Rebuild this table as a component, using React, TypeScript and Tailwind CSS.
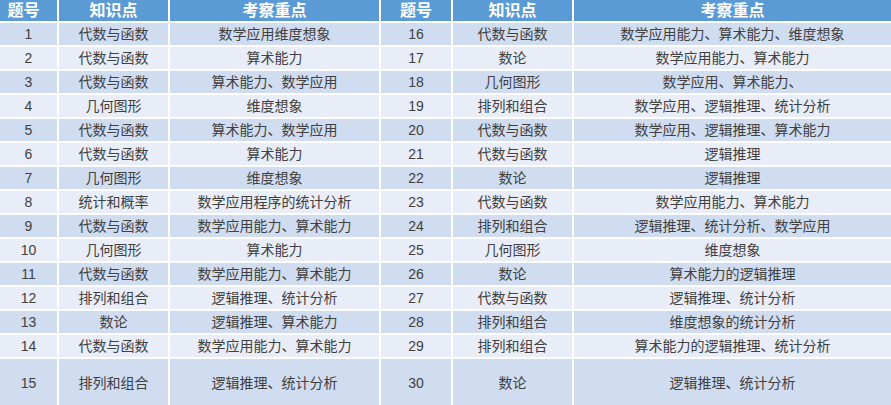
const rows: [string, string, string, string, string, string][] = [
  ["1", "代数与函数", "数学应用维度想象", "16", "代数与函数", "数学应用能力、算术能力、维度想象"],
  ["2", "代数与函数", "算术能力", "17", "数论", "数学应用能力、算术能力"],
  ["3", "代数与函数", "算术能力、数学应用", "18", "几何图形", "数学应用、算术能力、"],
  ["4", "几何图形", "维度想象", "19", "排列和组合", "数学应用、逻辑推理、统计分析"],
  ["5", "代数与函数", "算术能力、数学应用", "20", "代数与函数", "数学应用、逻辑推理、算术能力"],
  ["6", "代数与函数", "算术能力", "21", "代数与函数", "逻辑推理"],
  ["7", "几何图形", "维度想象", "22", "数论", "逻辑推理"],
  ["8", "统计和概率", "数学应用程序的统计分析", "23", "代数与函数", "数学应用能力、算术能力"],
  ["9", "代数与函数", "数学应用能力、算术能力", "24", "排列和组合", "逻辑推理、统计分析、数学应用"],
  ["10", "几何图形", "算术能力", "25", "几何图形", "维度想象"],
  ["11", "代数与函数", "数学应用能力、算术能力", "26", "数论", "算术能力的逻辑推理"],
  ["12", "排列和组合", "逻辑推理、统计分析", "27", "代数与函数", "逻辑推理、统计分析"],
  ["13", "数论", "逻辑推理、算术能力", "28", "排列和组合", "维度想象的统计分析"],
  ["14", "代数与函数", "数学应用能力、算术能力", "29", "排列和组合", "算术能力的逻辑推理、统计分析"],
  ["15", "排列和组合", "逻辑推理、统计分析", "30", "数论", "逻辑推理、统计分析"],
];

const headers = ["题号", "知识点", "考察重点", "题号", "知识点", "考察重点"];

export default function App() {
  return (
    <div
      className="w-[891px] h-[405px] overflow-hidden bg-white"
      style={{ fontFamily: '"Liberation Sans", "Noto Sans CJK SC", sans-serif' }}
    >
      <div className="grid grid-cols-[57px_109px_209px_70px_119px_1fr] grid-rows-[21px_repeat(14,22px)_47px] gap-[2px] bg-white">
        {headers.map((h, i) => (
          <div
            key={"h" + i}
            className={
              "flex items-center justify-center bg-[#5b9bd5] text-white font-bold text-[16px] leading-none " +
              (i === 0 ? "pr-[10px]" : "")
            }
          >
            {h}
          </div>
        ))}
        {rows.map((r, ri) =>
          r.map((c, ci) => (
            <div
              key={ri + "-" + ci}
              className={
                "flex items-center justify-center text-[14px] leading-none text-[#404040] whitespace-nowrap " +
                (ri % 2 === 0 ? "bg-[#d0dcef]" : "bg-[#e9edf7]")
              }
            >
              {c}
            </div>
          ))
        )}
      </div>
    </div>
  );
}
